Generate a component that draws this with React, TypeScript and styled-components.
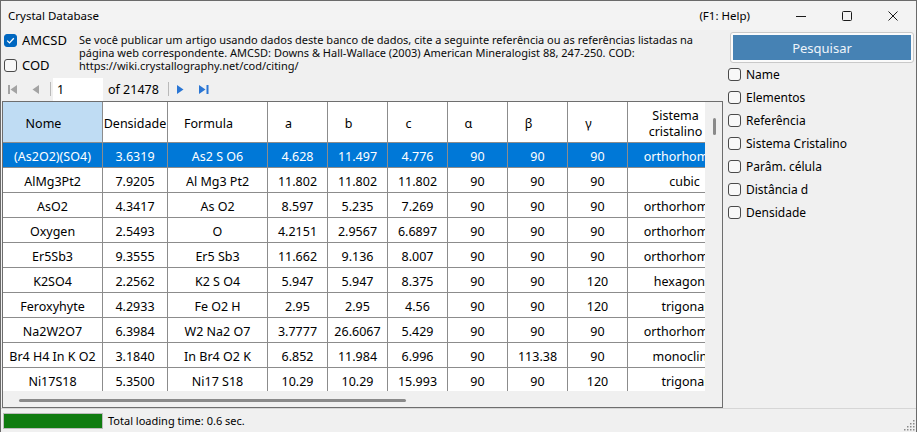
import React from "react";
import styled, { createGlobalStyle } from "styled-components";

const GlobalStyle = createGlobalStyle`
  * { box-sizing: border-box; }
  html, body { margin: 0; padding: 0; background: #202020; }
  body { font-family: "Noto Sans", "Open Sans", sans-serif; color: #000; }
`;

type Column = { title: string[]; width: number; tight?: boolean };

const columns: Column[] = [
  { title: ["Nome"], width: 100 },
  { title: ["Densidade"], width: 65, tight: true },
  { title: ["Formula"], width: 100 },
  { title: ["a"], width: 60 },
  { title: ["b"], width: 60 },
  { title: ["c"], width: 60 },
  { title: ["α"], width: 60 },
  { title: ["β"], width: 60 },
  { title: ["γ"], width: 60 },
  { title: ["Sistema", "cristalino"], width: 114 },
];

const template = columns.map((c) => `${c.width}px`).join(" ");

const rows: string[][] = [
  ["(As2O2)(SO4)", "3.6319", "As2 S O6", "4.628", "11.497", "4.776", "90", "90", "90", "orthorhombic"],
  ["AlMg3Pt2", "7.9205", "Al Mg3 Pt2", "11.802", "11.802", "11.802", "90", "90", "90", "cubic"],
  ["AsO2", "4.3417", "As O2", "8.597", "5.235", "7.269", "90", "90", "90", "orthorhombic"],
  ["Oxygen", "2.5493", "O", "4.2151", "2.9567", "6.6897", "90", "90", "90", "orthorhombic"],
  ["Er5Sb3", "9.3555", "Er5 Sb3", "11.662", "9.136", "8.007", "90", "90", "90", "orthorhombic"],
  ["K2SO4", "2.2562", "K2 S O4", "5.947", "5.947", "8.375", "90", "90", "120", "hexagonal"],
  ["Feroxyhyte", "4.2933", "Fe O2 H", "2.95", "2.95", "4.56", "90", "90", "120", "trigonal"],
  ["Na2W2O7", "6.3984", "W2 Na2 O7", "3.7777", "26.6067", "5.429", "90", "90", "90", "orthorhombic"],
  ["Br4 H4 In K O2", "3.1840", "In Br4 O2 K", "6.852", "11.984", "6.996", "90", "113.38", "90", "monoclinic"],
  ["Ni17S18", "5.3500", "Ni17 S18", "10.29", "10.29", "15.993", "90", "90", "120", "trigonal"],
];

const searchFields = [
  "Name",
  "Elementos",
  "Referência",
  "Sistema Cristalino",
  "Parâm. célula",
  "Distância d",
  "Densidade",
];

const Window = styled.div`
  width: 917px;
  height: 432px;
  display: flex;
  flex-direction: column;
  background: #f0f0f0;
  border: 1px solid #6a6a6a;
  border-bottom: none;
  overflow: hidden;
`;

const TitleBar = styled.div`
  height: 29px;
  flex-shrink: 0;
  display: flex;
  align-items: center;
  padding-left: 7px;
  background: #f3f3f3;
  font-size: 11.5px;
`;

const Title = styled.span`
  flex: 1;
`;

const HelpHint = styled.span`
  margin-right: 28px;
`;

const CaptionButton = styled.div`
  width: 46px;
  height: 29px;
  display: flex;
  align-items: center;
  justify-content: center;
`;

const Body = styled.div`
  flex: 1;
  display: flex;
  min-height: 0;
`;

const Main = styled.div`
  width: 722px;
  flex-shrink: 0;
  display: flex;
  flex-direction: column;
`;

const SourceBar = styled.div`
  height: 47px;
  display: flex;
  padding-left: 3px;
  overflow: hidden;
`;

const SourceList = styled.div`
  width: 75px;
  flex-shrink: 0;
  display: flex;
  flex-direction: column;
  gap: 7px;
  padding-top: 1px;
`;

const CheckRow = styled.label<{ $height: number; $size: number }>`
  height: ${(p) => p.$height}px;
  display: flex;
  align-items: center;
  gap: 5px;
  font-size: ${(p) => p.$size}px;
`;

const Box = styled.span<{ $checked?: boolean }>`
  width: 13px;
  height: 13px;
  flex-shrink: 0;
  border-radius: 3px;
  border: 1px solid ${(p) => (p.$checked ? "#0067c0" : "#4a4a4a")};
  background: ${(p) => (p.$checked ? "#0067c0" : "#f8f8f8")};
  display: flex;
  align-items: center;
  justify-content: center;
`;

const Citation = styled.p`
  margin: 0;
  padding-top: 3px;
  font-size: 11px;
  line-height: 13px;
  white-space: nowrap;
  color: #0a0a0a;
`;

const Navigator = styled.div`
  height: 24px;
  display: flex;
  align-items: center;
`;

const NavButton = styled.div<{ $width: number }>`
  width: ${(p) => p.$width}px;
  height: 24px;
  display: flex;
  align-items: center;
  justify-content: center;
`;

const NavSeparator = styled.span<{ $gap: number }>`
  width: 1px;
  height: 14px;
  margin-left: ${(p) => p.$gap}px;
  background: #b9b9b9;
`;

const PageInput = styled.div`
  width: 50px;
  height: 23px;
  margin-left: 2px;
  padding-left: 4px;
  display: flex;
  align-items: center;
  background: #fff;
  font-size: 12.5px;
`;

const PageCount = styled.span`
  width: 65px;
  padding-left: 5px;
  font-size: 12.5px;
`;

const Grid = styled.div`
  height: 307px;
  margin-left: 1px;
  display: flex;
  flex-direction: column;
  border: 1px solid #6e6e6e;
  background: #f0f0f0;
`;

const GridBody = styled.div`
  height: 289px;
  display: flex;
`;

const Viewport = styled.div`
  width: 702px;
  overflow: hidden;
`;

const RowBase = styled.div`
  display: grid;
  grid-template-columns: ${template};
  width: max-content;
`;

const HeaderRow = styled(RowBase)`
  height: 41px;
  background: #fff;
`;

const HeadCell = styled.div<{ $tight?: boolean; $active?: boolean }>`
  display: flex;
  align-items: center;
  justify-content: center;
  overflow: hidden;
  padding: 4px ${(p) => (p.$tight ? 0 : 18)}px 0 0;
  border-right: 1px solid #8c8c8c;
  border-bottom: 1px solid #8c8c8c;
  background: ${(p) => (p.$active ? "#bfdcf3" : "#fff")};
  font-size: 12.5px;
  line-height: 16px;
  text-align: center;
`;

const HeadText = styled.span`
  flex-shrink: 0;
  white-space: nowrap;
`;

const DataRow = styled(RowBase)<{ $selected?: boolean }>`
  height: 25px;
  background: ${(p) => (p.$selected ? "#0078d7" : "#fff")};
  color: ${(p) => (p.$selected ? "#fff" : "#000")};
`;

const Cell = styled.div`
  display: flex;
  align-items: center;
  justify-content: center;
  overflow: hidden;
  padding-top: 3px;
  border-right: 1px solid #8c8c8c;
  border-bottom: 1px solid #8c8c8c;
  font-size: 12.5px;
  white-space: nowrap;
`;

const VScroll = styled.div`
  width: 17px;
  padding: 16px 0 0 8px;
`;

const HScroll = styled.div`
  height: 16px;
  padding: 8px 0 0 16px;
`;

const Thumb = styled.div<{ $w: number; $h: number }>`
  width: ${(p) => p.$w}px;
  height: ${(p) => p.$h}px;
  border-radius: 2px;
  background: #8a8a8a;
`;

const SidePanel = styled.div`
  flex: 1;
  display: flex;
  flex-direction: column;
  padding: 2px 2px 0 5px;
`;

const SearchButton = styled.button`
  height: 31px;
  margin-left: 2px;
  padding: 2px;
  border: 1px solid #c9c9c9;
  border-radius: 3px;
  background: #fbfbfb;
  display: flex;
`;

const SearchFace = styled.span`
  flex: 1;
  display: flex;
  align-items: center;
  justify-content: center;
  background: #4682b4;
  color: #eef4fa;
  font-family: "Noto Sans", sans-serif;
  font-size: 13px;
`;

const StatusBar = styled.div`
  height: 24px;
  flex-shrink: 0;
  display: flex;
  align-items: center;
  padding-left: 2px;
  border-top: 1px solid #d6d6d6;
  font-size: 11px;
`;

const Progress = styled.div`
  width: 100px;
  height: 16px;
  border: 1px solid #bcbcbc;
  background: #e6e6e6;
  display: flex;
`;

const ProgressFill = styled.div`
  background: #107c10;
`;

const StatusText = styled.span`
  margin-left: 5px;
  flex: 1;
`;

const Grip = styled.svg`
  align-self: flex-end;
  margin: 0 1px 1px 0;
`;

const CheckMark = () => (
  <svg width="9" height="9" viewBox="0 0 9 9">
    <path d="M1.2 4.6 L3.5 6.9 L7.8 2.2" fill="none" stroke="#fff" strokeWidth="1.3" />
  </svg>
);

type CheckboxProps = { label: string; checked?: boolean; height: number; size: number };

const Checkbox = ({ label, checked, height, size }: CheckboxProps) => (
  <CheckRow $height={height} $size={size}>
    <Box $checked={checked}>{checked && <CheckMark />}</Box>
    {label}
  </CheckRow>
);

const gray = "#a3a3a3";
const blue = "#2a76d4";

const App = () => {
  return (
    <>
      <GlobalStyle />
      <Window>
        <TitleBar>
          <Title>Crystal Database</Title>
          <HelpHint>(F1: Help)</HelpHint>
          <CaptionButton>
            <svg width="10" height="10" viewBox="0 0 10 10">
              <path d="M0 5.5 H10" stroke="#1a1a1a" strokeWidth="1" />
            </svg>
          </CaptionButton>
          <CaptionButton>
            <svg width="10" height="10" viewBox="0 0 10 10">
              <rect x="0.5" y="0.5" width="9" height="9" rx="1" fill="none" stroke="#1a1a1a" strokeWidth="1" />
            </svg>
          </CaptionButton>
          <CaptionButton>
            <svg width="10" height="10" viewBox="0 0 10 10">
              <path d="M0.5 0.5 L9.5 9.5 M9.5 0.5 L0.5 9.5" stroke="#1a1a1a" strokeWidth="1" />
            </svg>
          </CaptionButton>
        </TitleBar>

        <Body>
          <Main>
            <SourceBar>
              <SourceList>
                <Checkbox label="AMCSD" checked height={18} size={13} />
                <Checkbox label="COD" height={18} size={13} />
              </SourceList>
              <Citation>
                Se você publicar um artigo usando dados deste banco de dados, cite a seguinte referência ou as referências listadas na
                <br />
                página web correspondente. AMCSD: Downs &amp; Hall-Wallace (2003) American Mineralogist 88, 247-250. COD:
                <br />
                https://wiki.crystallography.net/cod/citing/
              </Citation>
            </SourceBar>

            <Navigator>
              <NavButton $width={22}>
                <svg width="9" height="9" viewBox="0 0 9 9">
                  <rect x="0" y="0" width="2" height="9" fill={gray} />
                  <path d="M9 0 L2.5 4.5 L9 9 Z" fill={gray} />
                </svg>
              </NavButton>
              <NavButton $width={24}>
                <svg width="7" height="9" viewBox="0 0 7 9">
                  <path d="M7 0 L0.5 4.5 L7 9 Z" fill={gray} />
                </svg>
              </NavButton>
              <NavSeparator $gap={3} />
              <PageInput>1</PageInput>
              <PageCount>of 21478</PageCount>
              <NavSeparator $gap={0} />
              <NavButton $width={22}>
                <svg width="7" height="9" viewBox="0 0 7 9">
                  <path d="M0 0 L6.5 4.5 L0 9 Z" fill={blue} />
                </svg>
              </NavButton>
              <NavButton $width={26}>
                <svg width="10" height="9" viewBox="0 0 10 9">
                  <path d="M0 0 L6.5 4.5 L0 9 Z" fill={blue} />
                  <rect x="7.5" y="0" width="2" height="9" fill={blue} />
                </svg>
              </NavButton>
            </Navigator>

            <Grid>
              <GridBody>
                <Viewport>
                  <HeaderRow>
                    {columns.map((col, i) => (
                      <HeadCell key={i} $tight={col.tight} $active={i === 0}>
                        <HeadText>
                          {col.title.map((line, j) => (
                            <React.Fragment key={j}>
                              {j > 0 && <br />}
                              {line}
                            </React.Fragment>
                          ))}
                        </HeadText>
                      </HeadCell>
                    ))}
                  </HeaderRow>
                  {rows.map((row, i) => (
                    <DataRow key={i} $selected={i === 0}>
                      {row.map((value, j) => (
                        <Cell key={j}>{value}</Cell>
                      ))}
                    </DataRow>
                  ))}
                </Viewport>
                <VScroll>
                  <Thumb $w={3} $h={17} />
                </VScroll>
              </GridBody>
              <HScroll>
                <Thumb $w={387} $h={3} />
              </HScroll>
            </Grid>
          </Main>

          <SidePanel>
            <SearchButton>
              <SearchFace>Pesquisar</SearchFace>
            </SearchButton>
            {searchFields.map((field) => (
              <Checkbox key={field} label={field} height={23} size={12} />
            ))}
          </SidePanel>
        </Body>

        <StatusBar>
          <Progress>
            <ProgressFill style={{ width: "100%" }} />
          </Progress>
          <StatusText>Total loading time: 0.6 sec.</StatusText>
          <Grip width="12" height="12" viewBox="0 0 12 12">
            {[
              [10, 2],
              [7, 5],
              [10, 5],
              [4, 8],
              [7, 8],
              [10, 8],
              [1, 11],
              [4, 11],
              [7, 11],
              [10, 11],
            ].map(([x, y], i) => (
              <rect key={i} x={x} y={y - 1} width="1.5" height="1.5" fill="#8a8a8a" />
            ))}
          </Grip>
        </StatusBar>
      </Window>
    </>
  );
};

export default App;
